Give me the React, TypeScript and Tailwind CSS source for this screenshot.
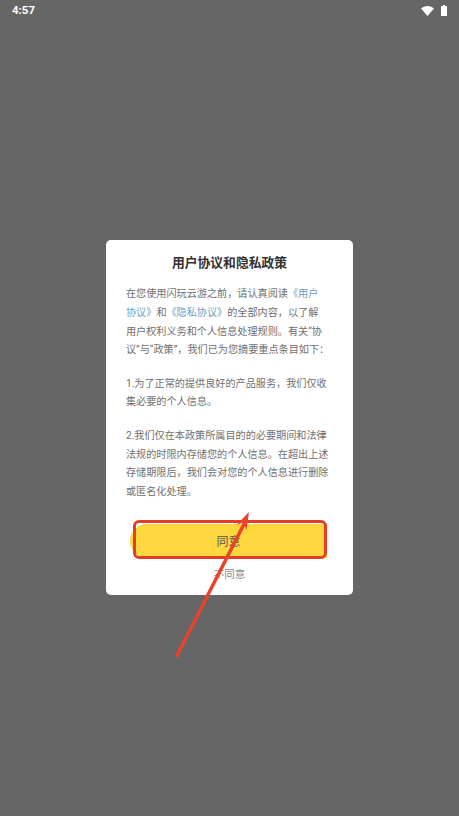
export default function App() {
  const font = { fontFamily: 'Roboto, "Noto Sans CJK SC", sans-serif' };
  return (
    <div className="relative flex h-[816px] w-[459px] flex-col overflow-hidden bg-[#666666]" style={font}>
      {/* status bar */}
      <div className="flex h-[19px] shrink-0 items-center justify-between pl-[12px] pr-[12px] pt-[2px] text-white">
        <span className="text-[11.5px] font-bold leading-none">4:57</span>
        <div className="flex items-center gap-[7px]">
          <svg width="13" height="10" viewBox="0 0 13 10">
            <path d="M0 2.6C1.8 1 4 0 6.5 0S11.2 1 13 2.6L6.5 10z" fill="#fff" />
          </svg>
          <svg width="6" height="11" viewBox="0 0 6 11">
            <path d="M2 0h2v1h1.4c.3 0 .6.3.6.6v8.800c0 .3-.3.6-.6.6H.6c-.3 0-.6-.3-.6-.6V1.600c0-.3.3-.6.6-.6H2z" fill="#fff" />
          </svg>
        </div>
      </div>

      <div className="flex flex-1 items-center justify-center">
        <div className="flex h-[355px] w-[247px] flex-col rounded-[5px] bg-white">
          <h1 className="mt-[14px] text-center text-[12.8px] font-bold leading-[18px] text-[#333333]">用户协议和隐私政策</h1>
          <div className="mt-[13px] flex flex-col gap-[14.500px] pl-[20px] text-[10.15px] leading-[18.800px] text-[#707070]">
            <p className="whitespace-nowrap">
              在您使用闪玩云游之前，请认真阅读<span className="text-[#6f9fc8]">《用户</span>
              <br />
              <span className="text-[#6f9fc8]">协议》</span>和<span className="text-[#6f9fc8]">《隐私协议》</span>的全部内容，以了解
              <br />
              用户权利义务和个人信息处理规则。有关“协
              <br />
              议”与“政策”，我们已为您摘要重点条目如下：
            </p>
            <p className="whitespace-nowrap">
              1.为了正常的提供良好的产品服务，我们仅收
              <br />
              集必要的个人信息。
            </p>
            <p className="whitespace-nowrap">
              2.我们仅在本政策所属目的的必要期间和法律
              <br />
              法规的时限内存储您的个人信息。在超出上述
              <br />
              存储期限后，我们会对您的个人信息进行删除
              <br />
              或匿名化处理。
            </p>
          </div>
          <div className="relative ml-[24px] mt-[22px] flex h-[34px] w-[197px] items-center justify-center rounded-l-full rounded-br-[5px] rounded-tr-[12px] bg-[#fed83e] pt-[2px] text-[12px] text-[#555555]">
            同意
            <div className="absolute -bottom-[1px] -top-[4px] left-[3px] right-0 rounded-[6px] border-[3.500px] border-[#e63e26]" />
          </div>
          <div className="mt-[9px] text-center text-[10.5px] leading-[16px] text-[#888888]">不同意</div>
        </div>
      </div>

      {/* red annotation arrow */}
      <svg className="absolute left-0 top-0" width="459" height="816" viewBox="0 0 459 816">
        <path d="M177 655.500L244 524" stroke="#e8432b" strokeWidth="3.500" strokeLinecap="round" fill="none" />
        <path d="M249 512L246.500 530L243.500 522.500L236.500 525z" fill="#e8432b" />
      </svg>
    </div>
  );
}
